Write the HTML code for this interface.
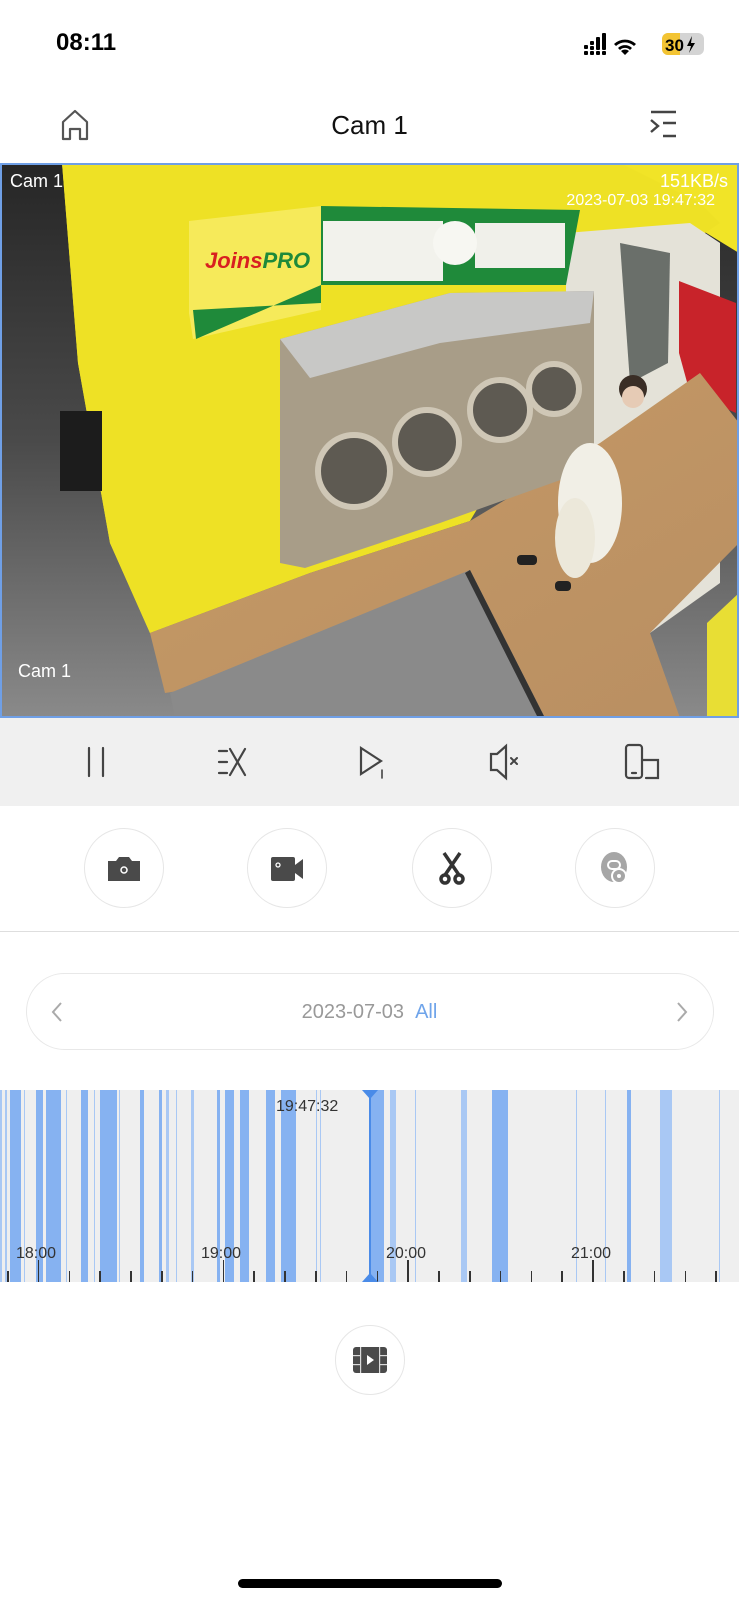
<!DOCTYPE html>
<html><head><meta charset="utf-8">
<style>
*{margin:0;padding:0;box-sizing:border-box}
body{width:739px;height:1600px;background:#fff;font-family:"Liberation Sans",sans-serif;position:relative;overflow:hidden}
.abs{position:absolute}
.ctrl{top:718px;left:0;width:739px;height:88px;background:#f0f0f0}
.circ{width:80px;height:80px;border-radius:50%;border:1.5px solid #e6e6e6;background:#fff;display:flex;align-items:center;justify-content:center}
#tl{top:1090px;left:0;width:739px;height:192px;background:#efefef;overflow:hidden}
.bar{position:absolute;top:0;height:192px;background:#86b2f1}
.tick{position:absolute;bottom:0;width:1.5px;height:11px;background:#333}
.lbl{position:absolute;top:155px;font-size:16px;color:#333}
</style></head><body>

<div class="abs" style="left:56px;top:29px;font-size:24px;font-weight:bold;color:#000">08:11</div>
<svg class="abs" style="left:584px;top:33px" width="122" height="26" viewBox="0 0 122 26">
 <g fill="#000"><rect x="0" y="12" width="4" height="4" rx="1"/><rect x="0" y="18" width="4" height="4" rx="1"/>
 <rect x="6" y="8" width="4" height="4" rx="1"/><rect x="6" y="13" width="4" height="4" rx="1"/><rect x="6" y="18" width="4" height="4" rx="1"/>
 <rect x="12" y="4" width="4" height="13" rx="1"/><rect x="12" y="18" width="4" height="4" rx="1"/>
 <rect x="18" y="0" width="4" height="17" rx="1"/><rect x="18" y="18" width="4" height="4" rx="1"/>
 <path d="M41 22l-4-4a6 6 0 0 1 8 0z M34 15a10 10 0 0 1 14 0l-2 2a7 7 0 0 0-10 0z M30 11a16 16 0 0 1 22 0l-2 2a13 13 0 0 0-18 0z"/></g>
 <rect x="78" y="0" width="42" height="22" rx="6" fill="#d4d4d4"/>
 <path d="M78 6a6 6 0 0 1 6-6h12v22h-12a6 6 0 0 1-6-6z" fill="#f3c433"/>
 <text x="81" y="18" font-size="17" font-weight="bold" font-family="Liberation Sans" fill="#000">30</text>
 <path d="M108 3l-5 10h4l-2 7 6-10h-4z" fill="#000"/>
</svg>

<svg class="abs" style="left:60px;top:108px" width="30" height="34" viewBox="0 0 30 34"><path d="M3 31V14L15 3l12 11v17h-7V21h-10v10z" fill="none" stroke="#555" stroke-width="2.2" stroke-linejoin="round"/></svg>
<div class="abs" style="left:0;width:739px;top:110px;text-align:center;font-size:26px;font-weight:500;color:#111">Cam 1</div>
<svg class="abs" style="left:648px;top:110px" width="30" height="30" viewBox="0 0 30 30"><g stroke="#444" stroke-width="2.4" fill="none"><path d="M3 2h25M3 10l7 6-7 6M15 13h13M15 26h13"/></g></svg>

<!-- video -->
<svg class="abs" style="left:0;top:163px" width="739" height="555" viewBox="0 0 739 555">
 <defs><linearGradient id="st" x1="0" y1="0" x2="0" y2="1"><stop offset="0" stop-color="#262626"/><stop offset=".5" stop-color="#4a4a4a"/><stop offset="1" stop-color="#8a8a8a"/></linearGradient>
 <linearGradient id="wd" x1="0" y1="0" x2="1" y2="1"><stop offset="0" stop-color="#c69a66"/><stop offset="1" stop-color="#b98f62"/></linearGradient></defs>
 <rect width="739" height="555" fill="url(#st)"/>
 <polygon points="62,0 739,0 739,90 690,60 620,40 590,130 300,250 150,470 110,380 78,200" fill="#f1e427"/>
 <polygon points="62,0 620,0 700,40 720,60 600,140 470,358 310,410 150,470 110,380 78,200" fill="#eee125"/>
 <polygon points="566,70 690,60 720,80 720,420 650,470 566,260" fill="#e4e2d8"/>
 <polygon points="679,118 736,140 736,250 690,230 679,190" fill="#c8232a"/>
 <polygon points="620,80 670,90 668,200 630,220" fill="#6a6f6a"/>
 <polygon points="150,470 310,410 470,358 600,280 700,210 739,260 739,380 650,470 680,555 545,555 470,407 230,520 165,530" fill="url(#wd)"/>
 <polygon points="170,530 470,407 545,555 175,555" fill="#8a8a8a"/>
 <polygon points="470,407 545,555 538,555 465,410" fill="#333"/>
 <polygon points="707,460 739,430 739,555 707,555" fill="#e8de34"/>
 <polygon points="189,58 321,43 321,147 193,176 189,150" fill="#f6ea5a"/>
 <polygon points="321,43 580,47 566,122 321,122 196,176 193,147 321,140" fill="#1f8a3a"/>
 <rect x="323" y="58" width="120" height="60" fill="#f2f2ec"/>
 <rect x="475" y="60" width="90" height="45" fill="#f0f0ea"/>
 <circle cx="455" cy="80" r="22" fill="#f7f7f2"/>
 <text x="205" y="105" font-size="22" font-weight="bold" font-style="italic" fill="#d82020" font-family="Liberation Sans">Joins<tspan fill="#1e8a3a">PRO</tspan></text>
 <polygon points="280,176 450,130 594,128 594,305 440,360 305,405 280,400" fill="#a89d88"/>
 <polygon points="280,176 450,130 594,128 590,160 440,180 310,215" fill="#c8c8c6"/>
 <g fill="#5e5a52" stroke="#cfc7b6" stroke-width="6"><circle cx="354" cy="308" r="36"/><circle cx="427" cy="279" r="32"/><circle cx="500" cy="247" r="30"/><circle cx="554" cy="226" r="25"/></g>
 <ellipse cx="590" cy="340" rx="32" ry="60" fill="#f1efe6"/><ellipse cx="575" cy="375" rx="20" ry="40" fill="#ece8da"/>
 <circle cx="633" cy="226" r="14" fill="#3a2e26"/><circle cx="633" cy="234" r="11" fill="#e6cbb5"/>
 <rect x="517" y="392" width="20" height="10" rx="4" fill="#222"/><rect x="555" y="418" width="16" height="10" rx="4" fill="#222"/>
 <rect x="60" y="248" width="42" height="80" fill="#1c1c1c"/>
 <text x="10" y="24" font-size="18" fill="#fff" font-family="Liberation Sans">Cam 1</text>
 <text x="728" y="24" font-size="18" fill="#fff" text-anchor="end" font-family="Liberation Sans">151KB/s</text>
 <text x="715" y="42" font-size="16" fill="#fff" text-anchor="end" font-family="Liberation Sans">2023-07-03 19:47:32</text>
 <text x="18" y="514" font-size="18" fill="#fff" font-family="Liberation Sans">Cam 1</text>
 <rect x="1" y="1" width="737" height="553" fill="none" stroke="#6f9fe6" stroke-width="2"/>
</svg>

<div class="abs ctrl"></div>
<svg class="abs" style="left:0;top:718px" width="739" height="88" viewBox="0 0 739 88">
 <g stroke="#444" stroke-width="2.2" fill="none" stroke-linecap="round">
  <path d="M89 30v28M103 30v28"/>
  <path d="M219 33h8M219 44h8M219 55h8M230 31l15 26M245 31l-15 26"/>
  <path d="M361 30v26l20-13z"/><path d="M382 52v8" stroke-width="1.6"/>
  <path d="M491 36h6l9-8v32l-9-8h-6z"/><path d="M511 40l6 6M517 40l-6 6" stroke-width="2"/>
  <rect x="626" y="27" width="16" height="33" rx="3"/><path d="M642 42h16v18h-12"/><path d="M632 55h4"/>
 </g>
</svg>

<div class="abs circ" style="left:84px;top:828px"><svg width="36" height="30" viewBox="0 0 36 30"><path d="M2 8h8l3-4h10l3 4h8v20H2z" fill="#4a4a4a"/><circle cx="18" cy="17" r="3" fill="none" stroke="#fff" stroke-width="1.5"/></svg></div>
<div class="abs circ" style="left:247px;top:828px"><svg width="36" height="30" viewBox="0 0 36 30"><rect x="2" y="4" width="24" height="24" rx="2" fill="#4a4a4a"/><path d="M26 12l8-6v20l-8-6z" fill="#4a4a4a"/><circle cx="9" cy="12" r="2" fill="none" stroke="#fff" stroke-width="1.3"/></svg></div>
<div class="abs circ" style="left:412px;top:828px"><svg width="30" height="34" viewBox="0 0 30 34"><g fill="none" stroke="#333" stroke-width="3.5"><path d="M7 2l15 22M23 2L8 24"/><circle cx="8" cy="28" r="4"/><circle cx="22" cy="28" r="4"/></g></svg></div>
<div class="abs circ" style="left:575px;top:828px"><svg width="32" height="34" viewBox="0 0 32 34"><ellipse cx="15" cy="16" rx="13" ry="15" fill="#a6a6a6"/><rect x="9" y="10" width="12" height="8" rx="4" fill="none" stroke="#fff" stroke-width="2"/><circle cx="20" cy="25" r="7" fill="#a6a6a6" stroke="#fff" stroke-width="2"/><circle cx="20" cy="25" r="2" fill="#fff"/></svg></div>

<div class="abs" style="left:0;top:931px;width:739px;height:1px;background:#dedede"></div>

<div class="abs" style="left:26px;top:973px;width:688px;height:77px;border:1.5px solid #e8e8e8;border-radius:39px"></div>
<svg class="abs" style="left:50px;top:1001px" width="14" height="22" viewBox="0 0 14 22"><path d="M11 2L3 11l8 9" fill="none" stroke="#aaa" stroke-width="2"/></svg>
<svg class="abs" style="left:675px;top:1001px" width="14" height="22" viewBox="0 0 14 22"><path d="M3 2l8 9-8 9" fill="none" stroke="#aaa" stroke-width="2"/></svg>
<div class="abs" style="left:0;width:739px;top:1001px;text-align:center;font-size:20px;color:#999">2023-07-03&nbsp;&nbsp;<span style="color:#6fa4ea">All</span></div>

<div class="abs" id="tl"></div>

<div class="abs" style="left:335px;top:1325px;width:70px;height:70px;border-radius:50%;border:1.5px solid #e6e6e6"></div>
<svg class="abs" style="left:352px;top:1346px" width="36" height="28" viewBox="0 0 36 28"><rect x="1" y="1" width="34" height="26" rx="3" fill="#4a4a4a"/><g fill="#fff" opacity=".8"><rect x="8" y="1" width="1.2" height="26"/><rect x="27" y="1" width="1.2" height="26"/><rect x="1" y="9" width="7" height="1.2"/><rect x="1" y="18" width="7" height="1.2"/><rect x="28" y="9" width="7" height="1.2"/><rect x="28" y="18" width="7" height="1.2"/></g><path d="M15 9v10l7-5z" fill="#fff"/></svg>

<div class="abs" style="left:238px;top:1579px;width:264px;height:9px;border-radius:5px;background:#000"></div>

<script>
var tl=document.getElementById('tl'),h='';
var bars=[[0,1.5,1],[5,2,1],[10,11,0],[24,1,1],[36,7,0],[46,15,0],[66,1,1],[81,7,0],[94,1,1],[100,17,0],[119,1,1],[140,4,0],[159,3,0],[166,3,1],[176,1,1],[191,3,1],[217,3,0],[225,9,0],[240,9,0],[266,9,0],[281,15,0],[316,1,1],[320,1,1],[370,14,0],[390,6,1],[415,1,1],[461,6,1],[492,16,0],[576,1,1],[605,1,1],[627,4,0],[660,12,1],[719,1,1]];
bars.forEach(function(b){h+='<div class="bar" style="left:'+b[0]+'px;width:'+b[1]+'px;background:'+(b[2]?'#a9c8f4':'#86b2f1')+'"></div>';});
for(var i=0;i<25;i++){var x=7+i*30.8;var maj=(i%6==1);h+='<div class="tick" style="left:'+x.toFixed(1)+'px;height:'+(maj?22:11)+'px"></div>';}
[['18:00',38],['19:00',223],['20:00',408],['21:00',593]].forEach(function(l){h+='<div class="lbl" style="left:'+(l[1]-22)+'px">'+l[0]+'</div>';});
h+='<div class="lbl" style="left:276px;top:8px">19:47:32</div>';
h+='<div style="position:absolute;left:369px;top:0;width:2px;height:192px;background:#4a8be8"></div>';
h+='<div style="position:absolute;left:362px;top:0;width:0;height:0;border-left:8px solid transparent;border-right:8px solid transparent;border-top:9px solid #4a8be8"></div>';
h+='<div style="position:absolute;left:362px;bottom:0;width:0;height:0;border-left:8px solid transparent;border-right:8px solid transparent;border-bottom:9px solid #4a8be8"></div>';
tl.innerHTML=h;
</script>
</body></html>
